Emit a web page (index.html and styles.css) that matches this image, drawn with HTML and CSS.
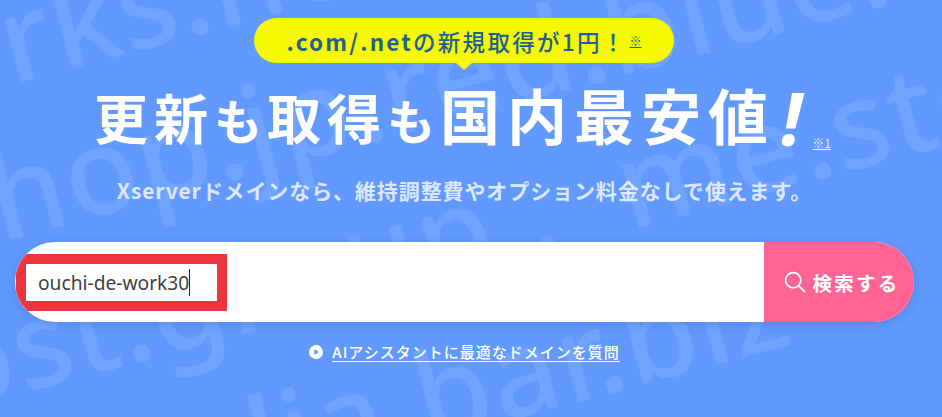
FILE: index.html
```html
<!DOCTYPE html>
<html lang="ja">
<head>
<meta charset="utf-8">
<title>Xserverドメイン</title>
<link rel="stylesheet" href="styles.css">
</head>
<body>
<main class="hero">
  <div class="watermark" aria-hidden="true">
    <span class="wm wm1">works.net</span>
    <span class="wm wm2">shop.jp.red.blue.in</span>
    <span class="wm wm3">post.group&nbsp;.&nbsp;&nbsp;me.store</span>
    <span class="wm wm4">media.bar.biz</span>
  </div>
  <div class="content">
    <p class="bubble"><span class="bubble-text"><span class="latin">.com/.net</span>の新規取得が1円！</span><a class="note" href="#">※</a></p>
    <h1 class="headline"><span class="hl-m">更新</span><span class="hl-s">も</span><span class="hl-m">取得</span><span class="hl-s">も</span><span class="hl-l">国内最安値</span><span class="bang">!</span><a class="note note-h" href="#">※1</a></h1>
    <p class="sub">Xserverドメインなら、維持調整費やオプション料金なしで使えます。</p>
    <form class="search">
      <div class="field">
        <div class="highlight"><span class="typed">ouchi-de-work30</span><span class="caret"></span></div>
      </div>
      <button class="submit" type="button">
        <svg class="search-icon" viewBox="0 0 22 22" width="22" height="22" fill="none" stroke="#fff" stroke-width="1.7" stroke-linecap="round"><circle cx="9.2" cy="9.2" r="7.6"/><path d="M14.8 14.8 20.6 20.6"/></svg>
        <span>検索する</span>
      </button>
    </form>
    <a class="ai-link" href="#">
      <svg class="play" viewBox="0 0 14 14" width="14" height="14"><circle cx="7" cy="7" r="7" fill="#fff"/><path d="M5.4 3.9 9.8 7 5.4 10.1Z" fill="#6299ff"/></svg>
      <span class="ai-text">AIアシスタントに最適なドメインを質問</span>
    </a>
  </div>
</main>
</body>
</html>
```
FILE: styles.css
```css
* { box-sizing: border-box; }
html, body { margin: 0; padding: 0; }
body {
  width: 942px;
  height: 417px;
  overflow: hidden;
  font-family: "Noto Sans CJK JP", "Noto Sans", sans-serif;
  background: #6299ff;
}
.hero {
  position: relative;
  width: 942px;
  height: 417px;
  overflow: hidden;
  background: #6299ff;
}
.watermark {
  position: absolute;
  inset: 0;
  overflow: hidden;
  pointer-events: none;
}
.wm {
  position: absolute;
  font-family: "Noto Sans", sans-serif;
  font-size: 120px;
  font-weight: 500;
  line-height: 1;
  letter-spacing: 1.5px;
  white-space: nowrap;
  color: rgba(255, 255, 255, 0.09);
  transform: rotate(-15deg);
  transform-origin: left top;
}
.wm1 { left: -183px; top: 27px; }
.wm2 { left: -84px; top: 155px; }
.wm3 { left: -149px; top: 329px; }
.wm4 { left: 14px; top: 443px; }
.content {
  position: relative;
  display: flex;
  flex-direction: column;
  align-items: center;
  width: 929px;
  padding-top: 18px;
}
.bubble {
  position: relative;
  display: flex;
  align-items: center;
  justify-content: center;
  width: 420px;
  height: 45px;
  margin: 0 1px 0 0;
  border-radius: 23px;
  background: #f7f900;
  color: #1f6197;
  font-size: 22.5px;
  font-weight: 500;
  letter-spacing: 2.3px;
}
.bubble::after {
  content: "";
  position: absolute;
  left: 202px;
  bottom: -7px;
  border-left: 8px solid transparent;
  border-right: 8px solid transparent;
  border-top: 7px solid #f7f900;
}
.latin { font-weight: 700; letter-spacing: 2.2px; }
.note {
  color: inherit;
  font-size: 12px;
  font-weight: 400;
  letter-spacing: 0;
  margin-left: 3px;
  text-decoration: underline;
}
.headline {
  display: flex;
  align-items: baseline;
  margin: 8px 4px 0 0;
  height: 82px;
  color: #fff;
  font-weight: 700;
  line-height: 82px;
  white-space: nowrap;
}
.hl-m { font-size: 54px; letter-spacing: 6px; }
.hl-s { font-size: 48px; letter-spacing: 5px; }
.hl-l { font-size: 60px; letter-spacing: 7px; }
.bang {
  font-family: "Noto Sans", sans-serif;
  font-size: 74px;
  font-style: italic;
  margin-left: 6px;
  transform: translateY(6px);
}
.note-h {
  align-self: flex-end;
  color: #e4ecff;
  font-size: 12px;
  line-height: 16px;
  margin: 0 0 2px 10px;
}
.sub {
  margin: 23px 0 0;
  color: #dde8ff;
  font-size: 21px;
  font-weight: 700;
  line-height: 28px;
  letter-spacing: 0.9px;
}
.search {
  display: flex;
  flex: none;
  width: 899px;
  height: 80px;
  margin-top: 38px;
  border-radius: 40px;
  overflow: hidden;
  background: #fff;
  box-shadow: 0 2px 8px rgba(40, 70, 140, 0.25);
}
.field {
  flex: 1;
  display: flex;
  align-items: center;
}
.highlight {
  display: flex;
  align-items: center;
  width: 211px;
  height: 57px;
  margin-left: 1px;
  padding-left: 12px;
  border: 10px solid #ee343d;
  background: #fff;
  margin-top: 1px;
}
.typed {
  font-family: "Noto Sans", sans-serif;
  font-size: 19.2px;
  color: #3f3f3f;
}
.caret {
  width: 1px;
  height: 27px;
  background: #222;
}
.submit {
  display: flex;
  align-items: center;
  justify-content: center;
  gap: 7px;
  width: 150px;
  padding: 0 0 0 5px;
  border: 0;
  background: #ff6594;
  color: #fff;
  font-family: inherit;
  font-size: 19.5px;
  font-weight: 700;
  letter-spacing: 2.2px;
}
.search-icon { flex: none; }
.ai-link {
  display: flex;
  align-items: center;
  gap: 9px;
  margin-top: 19px;
  color: #fff;
  font-size: 15px;
  font-weight: 500;
  letter-spacing: 1px;
  text-decoration: none;
}
.play { flex: none; }
.ai-text { text-decoration: underline; text-underline-offset: 3px; }
```
